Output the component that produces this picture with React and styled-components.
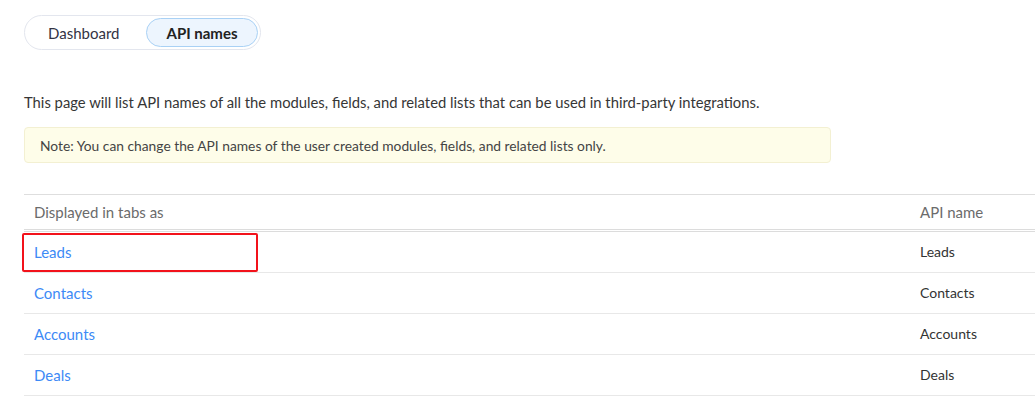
import React from 'react'
import styled, { createGlobalStyle } from 'styled-components'

const GlobalStyle = createGlobalStyle`
  body {
    margin: 0;
    background: #ffffff;
    font-family: Lato, "Open Sans", sans-serif;
    color: #333333;
  }
`

const Page = styled.div`
  padding: 15px 0 0 24px;
`

const TabGroup = styled.div`
  display: inline-flex;
  align-items: center;
  gap: 2px;
  height: 35px;
  padding: 0 2px 0 0;
  box-sizing: border-box;
  border: 1px solid #e3e6ee;
  border-radius: 18px;
`

const Tab = styled.button`
  height: 29px;
  padding: ${p => (p.active ? '0 19px' : '0 24px 0 22px')};
  border-radius: 15px;
  border: 1px solid ${p => (p.active ? '#a9d1f5' : 'transparent')};
  background: ${p => (p.active ? '#edf5fe' : 'transparent')};
  font-family: Lato, sans-serif;
  font-size: 15px;
  font-weight: ${p => (p.active ? 700 : 400)};
  color: ${p => (p.active ? '#222222' : '#333344')};
  cursor: pointer;
`

const Intro = styled.p`
  margin: 42px 0 0;
  font-size: 14.8px;
  line-height: 20px;
  color: #363636;
`

const Note = styled.div`
  margin-top: 15px;
  width: 807px;
  height: 36px;
  box-sizing: border-box;
  display: flex;
  align-items: center;
  padding: 0 15px;
  background: #fefde9;
  border: 1px solid #f3f0d2;
  border-radius: 4px;
  font-size: 13.8px;
  color: #444444;
`

const Table = styled.div`
  margin-top: 31px;
  border-top: 1px solid #dedede;
`

const Row = styled.div`
  position: relative;
  display: grid;
  grid-template-columns: 886px 1fr;
  align-items: center;
  height: ${p => (p.head ? '34px' : '40px')};
  border-bottom: ${p => (p.head ? '3px double #dcdcdc' : '1px solid #e8e8e8')};
  font-size: 15px;
`

const HeadCell = styled.div`
  padding-left: 10px;
  color: #6b6b6b;
`

const LinkCell = styled.a`
  padding: 0 0 1px 10px;
  color: #3d8af6;
  text-decoration: none;
`

const Cell = styled.div`
  padding: 0 0 2px 10px;
  color: #333333;
  font-size: 14px;
`

const Highlight = styled.div`
  position: absolute;
  left: -2px;
  top: 1px;
  width: 236px;
  height: 39px;
  box-sizing: border-box;
  border: 2.5px solid #f2121b;
  border-radius: 2px;
  pointer-events: none;
`

const modules = ['Leads', 'Contacts', 'Accounts', 'Deals']

export default function App() {
  return (
    <Page>
      <GlobalStyle />
      <TabGroup>
        <Tab>Dashboard</Tab>
        <Tab active>API names</Tab>
      </TabGroup>
      <Intro>
        This page will list API names of all the modules, fields, and related lists that can be used in third-party integrations.
      </Intro>
      <Note>Note: You can change the API names of the user created modules, fields, and related lists only.</Note>
      <Table>
        <Row head>
          <HeadCell>Displayed in tabs as</HeadCell>
          <HeadCell>API name</HeadCell>
        </Row>
        {modules.map((m, i) => (
          <Row key={m}>
            {i === 0 && <Highlight />}
            <LinkCell href="#">{m}</LinkCell>
            <Cell>{m}</Cell>
          </Row>
        ))}
      </Table>
    </Page>
  )
}
